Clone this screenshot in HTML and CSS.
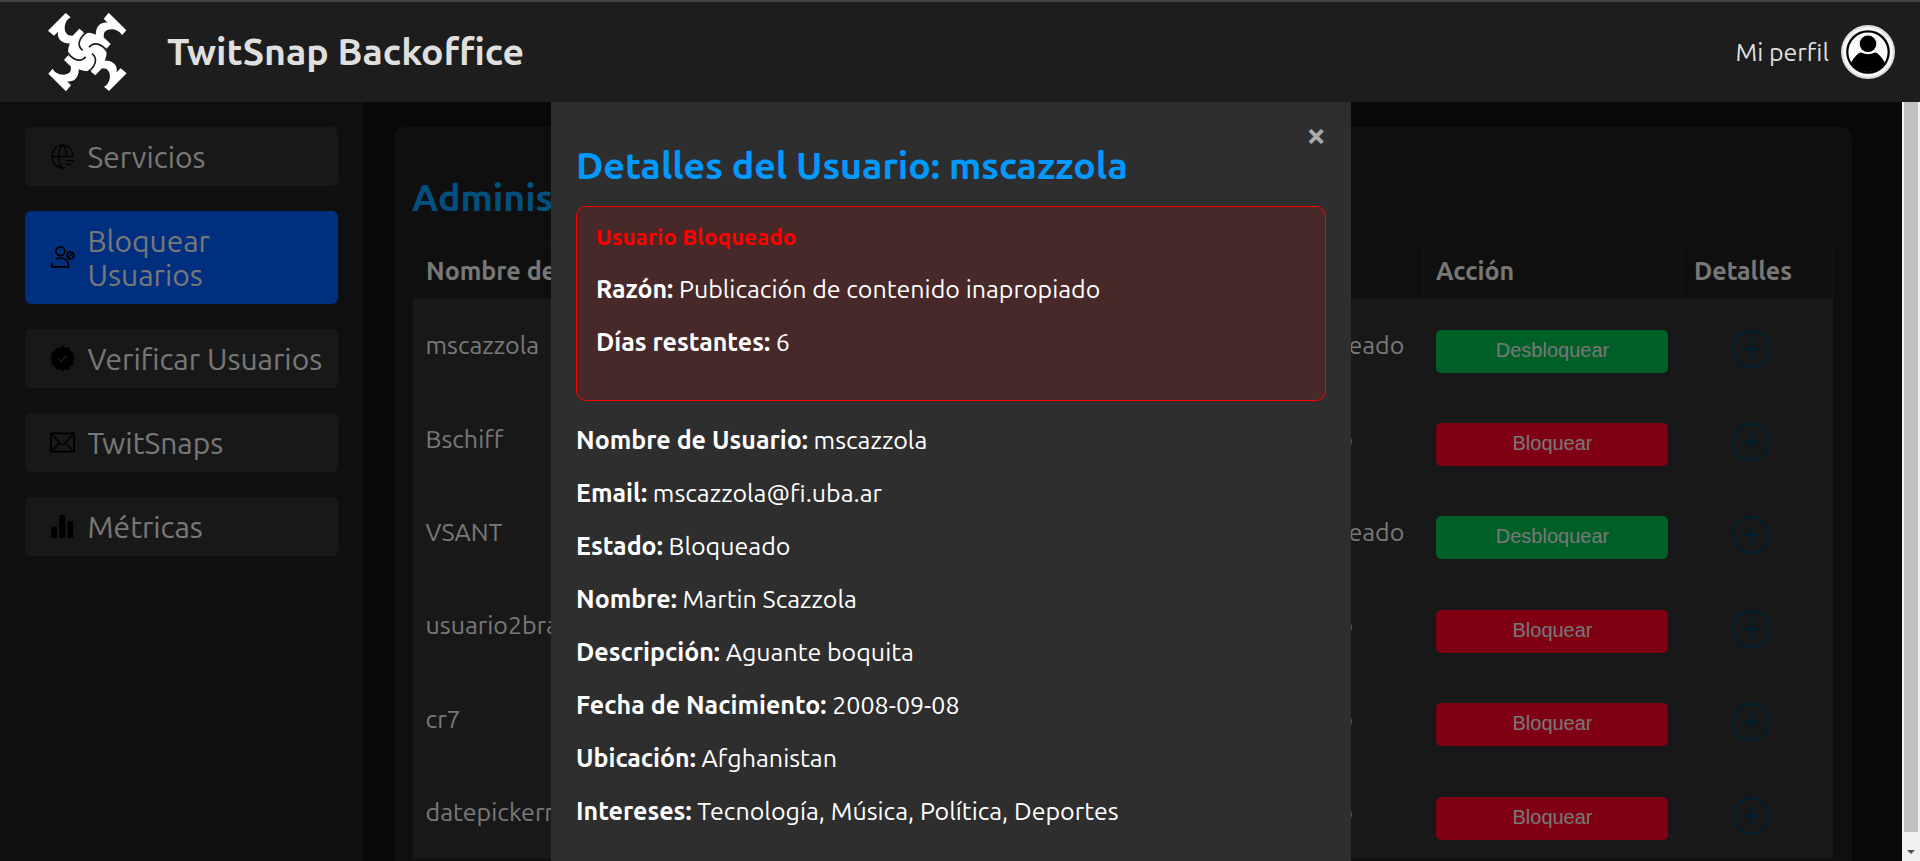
FILE: index.html
```
<!DOCTYPE html>
<html lang="es">
<head>
<meta charset="utf-8">
<title>TwitSnap Backoffice</title>
<link rel="stylesheet" href="styles.css">
</head>
<body>
<header class="header">
  <svg class="logo" viewBox="0 0 285 285">
    <defs>
      <path id="arm" d="M206 23L259 76L246 91C238 73 205 65 192 84L191 97L212 117L201 130L170 104C162 76 174 48 203 53L191 41Z"/>
      <path id="swirl" d="M147 127C160 110 186 112 206 147"/>
    </defs>
    <g fill="#fff">
      <circle cx="142" cy="141" r="58"/>
      <use href="#arm"/>
      <use href="#arm" transform="rotate(90 142 141)"/>
      <use href="#arm" transform="rotate(180 142 141)"/>
      <use href="#arm" transform="rotate(270 142 141)"/>
    </g>
    <g fill="none" stroke="#1d1d1d" stroke-width="5">
      <use href="#swirl"/>
      <use href="#swirl" transform="rotate(90 142 141)"/>
      <use href="#swirl" transform="rotate(180 142 141)"/>
      <use href="#swirl" transform="rotate(270 142 141)"/>
    </g>
  </svg>
  <h1 class="brand">TwitSnap Backoffice</h1>
  <div class="profile">
    <span>Mi perfil</span>
    <svg class="avatar" viewBox="0 0 54 54">
      <circle cx="27" cy="27" r="27" fill="#ddd"/>
      <circle cx="27" cy="27" r="25" fill="#f8f8f8"/>
      <circle cx="27" cy="27" r="20.7" fill="#fbfbfb" stroke="#000" stroke-width="2.2"/>
      <circle cx="27" cy="18.8" r="8.3"/>
      <path d="M10 38C13 32 17 28 20 27.500Q27 31 34 27.500C37 28 41 32 44 38A20.500 20.500 0 0 1 10 38Z"/>
    </svg>
  </div>
</header>

<div class="viewport">
  <div class="page">
    <nav class="sidebar">
      <a class="item">
        <svg class="icon" viewBox="0 0 24 24" fill="none" stroke="#000" stroke-width="1.300"><path d="M22 12A10 11 0 1 0 14 22.800M2 12H22M12 1C7 6 7 18 12 23M12 1C15 4 16 8 16 12M15 16H23M15 19.500H20"/></svg>
        <span>Servicios</span>
      </a>
      <a class="item active">
        <svg class="icon" viewBox="0 0 24 24" fill="none" stroke="#000" stroke-width="1.700"><circle cx="10" cy="6" r="4.300"/><path d="M2 17V21H18C18 15 14 12.500 10 12.500Q7.500 12.500 5.500 13.800"/><circle cx="19.500" cy="10" r="3.300"/><path d="M17.300 12.300L21.700 7.700"/></svg>
        <span>Bloquear Usuarios</span>
      </a>
      <a class="item">
        <svg class="icon" viewBox="0 0 24 24"><path d="M12 -.5L14.700 2L18.300 1.300L19.400 4.800L22.800 6L22.200 9.500L23.700 12L22.200 14.500L22.800 18L19.400 19.200L18.300 22.700L14.700 22L12 24.500L9.300 22L5.700 22.700L4.600 19.200L1.200 18L1.800 14.500L.3 12L1.800 9.500L1.200 6L4.600 4.800L5.700 1.300L9.300 2Z"/><path d="M8 12.200L10.800 15L16 9.500" fill="none" stroke="#303030" stroke-width="1.800"/></svg>
        <span>Verificar Usuarios</span>
      </a>
      <a class="item">
        <svg class="icon" viewBox="0 0 24 24" fill="none" stroke="#000"><path d="M.9 3.300H23.100V20.700H.9Z" stroke-width="1.700"/><path d="M2 4.500L10.500 13.500Q12 15 13.500 13.500L22 4.500M2.500 19.500L9 12.500M21.500 19.500L15 12.500" stroke-width="1.300"/></svg>
        <span>TwitSnaps</span>
      </a>
      <a class="item">
        <svg class="icon" viewBox="0 0 24 24"><rect x="1.200" y="12" width="5.600" height="11" rx="1"/><rect x="8.800" y="1" width="5.800" height="22" rx="1"/><rect x="16.800" y="7" width="5.400" height="16" rx="1"/></svg>
        <span>Métricas</span>
      </a>
    </nav>

    <main class="main">
      <section class="panel">
        <h2 class="title">Administración</h2>
        <table class="users">
          <colgroup><col class="c-name"><col class="c-mail"><col class="c-state"><col class="c-action"><col class="c-more"></colgroup>
          <thead><tr><th>Nombre de</th><th></th><th></th><th>Acción</th><th>Detalles</th></tr></thead>
          <tbody>
            <tr><td>mscazzola</td><td></td><td>Bloqueado</td><td><button class="btn free">Desbloquear</button></td><td><svg class="plus" viewBox="0 0 40 40"><circle cx="20" cy="20" r="18"/><path d="M20 10V30M10 20H30"/></svg></td></tr>
            <tr><td>Bschiff</td><td></td><td>Activo</td><td><button class="btn block">Bloquear</button></td><td><svg class="plus" viewBox="0 0 40 40"><circle cx="20" cy="20" r="18"/><path d="M20 10V30M10 20H30"/></svg></td></tr>
            <tr><td>VSANT</td><td></td><td>Bloqueado</td><td><button class="btn free">Desbloquear</button></td><td><svg class="plus" viewBox="0 0 40 40"><circle cx="20" cy="20" r="18"/><path d="M20 10V30M10 20H30"/></svg></td></tr>
            <tr><td>usuario2bra</td><td></td><td>Activo</td><td><button class="btn block">Bloquear</button></td><td><svg class="plus" viewBox="0 0 40 40"><circle cx="20" cy="20" r="18"/><path d="M20 10V30M10 20H30"/></svg></td></tr>
            <tr><td>cr7</td><td></td><td>Activo</td><td><button class="btn block">Bloquear</button></td><td><svg class="plus" viewBox="0 0 40 40"><circle cx="20" cy="20" r="18"/><path d="M20 10V30M10 20H30"/></svg></td></tr>
            <tr><td>datepickerr</td><td></td><td>Activo</td><td><button class="btn block">Bloquear</button></td><td><svg class="plus" viewBox="0 0 40 40"><circle cx="20" cy="20" r="18"/><path d="M20 10V30M10 20H30"/></svg></td></tr>
          </tbody>
        </table>
      </section>
    </main>

    <div class="overlay">
      <div class="modal">
        <span class="close">×</span>
        <h2 class="modal-title">Detalles del Usuario: mscazzola</h2>
        <div class="alert">
          <h4>Usuario Bloqueado</h4>
          <p><b>Razón:</b> Publicación de contenido inapropiado</p>
          <p><b>Días restantes:</b> 6</p>
        </div>
        <p><b>Nombre de Usuario:</b> mscazzola</p>
        <p><b>Email:</b> mscazzola@fi.uba.ar</p>
        <p><b>Estado:</b> Bloqueado</p>
        <p><b>Nombre:</b> Martin Scazzola</p>
        <p><b>Descripción:</b> Aguante boquita</p>
        <p><b>Fecha de Nacimiento:</b> 2008-09-08</p>
        <p><b>Ubicación:</b> Afghanistan</p>
        <p><b>Intereses:</b> Tecnología, Música, Política, Deportes</p>
      </div>
    </div>
  </div>
  <div class="scrollbar"><div class="thumb"></div><div class="arrow"></div></div>
</div>
</body>
</html>
```
FILE: styles.css
```
* { box-sizing: border-box; }
body {
  margin: 0;
  height: 861px;
  overflow: hidden;
  display: flex;
  flex-direction: column;
  background: #111;
  color: #eee;
  font: 400 25px/28px Ubuntu, "Noto Sans", sans-serif;
}
b { font-weight: 600; }

.header {
  height: 102px;
  flex: none;
  display: flex;
  align-items: center;
  padding: 0 25px 0 40px;
  background: #1d1d1d;
  border-top: 2px solid #414141;
  color: #dfdfdf;
}
.logo { width: 95px; height: 95px; }
.brand { margin: 0 0 2px 32px; font-size: 37.5px; line-height: 44px; font-weight: 600; }
.profile { margin-left: auto; display: flex; align-items: center; gap: 12px; }
.avatar { width: 54px; height: 54px; }

.viewport { flex: 1; min-height: 0; display: flex; }
.page { position: relative; flex: 1; min-width: 0; display: flex; overflow: hidden; background: #111; }

.sidebar {
  width: 363px;
  flex: none;
  padding: 25px;
  display: flex;
  flex-direction: column;
  gap: 25px;
  background: #1e1e1e;
}
.item {
  width: 313px;
  display: flex;
  align-items: center;
  gap: 12.500px;
  padding: 12.500px 0 12.500px 25px;
  border-radius: 6px;
  background: #303030;
  font-size: 30px;
  line-height: 34px;
}
.item.active { background: #005eff; padding-right: 50px; }
.icon { width: 25px; height: 25px; flex: none; overflow: visible; }

.main { flex: 1; padding: 25px 50px 0 31px; min-width: 0; }
.panel { height: 900px; padding: 48px 19px; border-radius: 10px; background: #1e1e1e; }
.title { margin: 0 0 25px -1px; font-size: 37.5px; line-height: 44px; font-weight: 600; color: #00a0ff; }
.users { width: 1419px; table-layout: fixed; border-collapse: collapse; background: #303030; }
.c-name { width: 300px; }
.c-mail { width: 557px; }
.c-state { width: 153px; }
.c-action { width: 258px; }
.c-more { width: 151px; }
.users th {
  height: 54px;
  padding: 0 12px 2px;
  border: 1px solid #2b2b2b;
  background: #1e1e1e;
  text-align: left;
  font-weight: 600;
  white-space: nowrap;
}
.users td { height: 93.400px; padding: 0 12px; white-space: nowrap; }
.btn {
  display: block;
  width: 232px;
  height: 43px;
  margin: 12px 0 0;
  padding: 0 0 2px 2px;
  border: 0;
  border-radius: 5px;
  color: #eee;
  font: 20px "Liberation Sans", Arial, sans-serif;
}
.free { background: #00be4e; }
.block { background: #ff0026; }
.plus { display: block; width: 40px; height: 40px; margin: 7px 0 0 37px; fill: none; stroke: #003e5c; stroke-width: 2.400; }

.overlay { position: absolute; inset: 0; background: rgba(0, 0, 0, .5); display: flex; justify-content: center; }
.modal { position: relative; width: 800px; padding: 41px 25px; background: #2e2e2e; color: #fff; }
.modal p { margin: 0 0 25px; }
.modal-title { margin: 0 0 19px; font-size: 37.5px; line-height: 44px; font-weight: 600; color: #09f; }
.close { position: absolute; right: 25px; top: 15px; font-size: 35px; line-height: 34px; font-weight: 700; color: #aaa; }
.alert { height: 195px; padding: 16px 19px; margin-bottom: 25px; border: 1px solid red; border-radius: 10px; background: #472929; }
.alert h4 { margin: 0 0 24px; font-size: 22.5px; line-height: 28px; font-weight: 600; color: red; }

.scrollbar { width: 18px; flex: none; background: #f1f1f1; padding: 0 2px; display: flex; flex-direction: column; }
.thumb { height: 730px; background: #c1c1c1; }
.arrow { margin: 18px auto 0 3px; border: 4px solid transparent; border-top-color: #505050; border-bottom: 0; }
```
